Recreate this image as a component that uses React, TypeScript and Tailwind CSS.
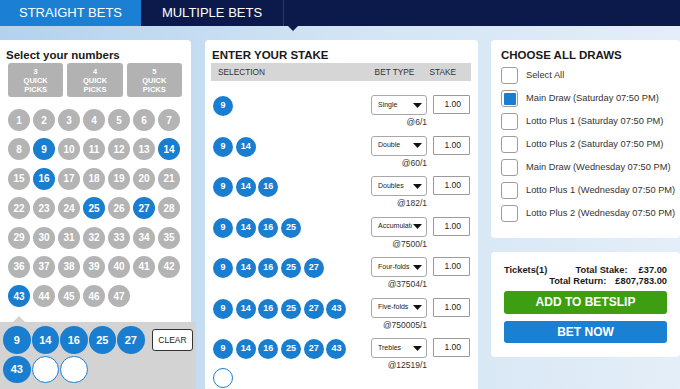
import React from 'react';

const picked = [9, 14, 16, 25, 27, 43];
const numbers = Array.from({ length: 47 }, (_, i) => i + 1);

const bets = [
  { balls: [9], type: 'Single', odds: '@6/1' },
  { balls: [9, 14], type: 'Double', odds: '@60/1' },
  { balls: [9, 14, 16], type: 'Doubles', odds: '@182/1' },
  { balls: [9, 14, 16, 25], type: 'Accumulator', odds: '@7500/1' },
  { balls: [9, 14, 16, 25, 27], type: 'Four-folds', odds: '@37504/1' },
  { balls: [9, 14, 16, 25, 27, 43], type: 'Five-folds', odds: '@750005/1' },
  { balls: [9, 14, 16, 25, 27, 43], type: 'Trebles', odds: '@12519/1', extra: true },
];

const draws = [
  { label: 'Select All', on: false },
  { label: 'Main Draw (Saturday 07:50 PM)', on: true },
  { label: 'Lotto Plus 1 (Saturday 07:50 PM)', on: false },
  { label: 'Lotto Plus 2 (Saturday 07:50 PM)', on: false },
  { label: 'Main Draw (Wednesday 07:50 PM)', on: false },
  { label: 'Lotto Plus 1 (Wednesday 07:50 PM)', on: false },
  { label: 'Lotto Plus 2 (Wednesday 07:50 PM)', on: false },
];

const narrowFace = "font-['Liberation_Sans_Narrow','Arial_Narrow','Liberation_Sans',sans-serif]";
const narrow = `${narrowFace} font-bold`;

function Caret() {
  return (
    <svg width="9" height="5" viewBox="0 0 9 5" className="shrink-0">
      <path d="M0 0h9L4.5 5z" fill="#111" />
    </svg>
  );
}

export default function App() {
  return (
    <div className="relative h-[389px] w-[680px] overflow-hidden bg-gradient-to-r from-[#b3d2ee] via-[#d2e4f4] to-[#e4eef8] font-['Liberation_Sans',Arial,sans-serif]">
      {/* tabs */}
      <div className="relative z-10 flex h-[26px] bg-[#0b1a4a]">
        <div className={`flex w-[141px] items-center justify-center bg-[#1b80d3] text-[13px] text-white ${narrowFace}`}>
          STRAIGHT BETS
        </div>
        <div className={`flex w-[142px] items-center justify-center text-[13px] text-white ${narrowFace}`}>
          MULTIPLE BETS
        </div>
        <div className="w-px bg-[#2c3a63]" />
        <div className="absolute left-[288px] top-[26px] h-0 w-0 border-l-[5px] border-r-[5px] border-t-[5px] border-l-transparent border-r-transparent border-t-[#0b1a4a]" />
      </div>

      <div className="flex items-start pt-[14px]">
        {/* left: numbers */}
        <div className="w-[191px] shrink-0">
          <div className="rounded-tr-[4px] bg-white pb-[15px] pt-[8px]">
            <div className={`pl-[6px] text-[11.5px] leading-[14px] text-[#1a1a1a] ${narrow}`}>Select your numbers</div>
            <div className="mt-[1px] grid grid-cols-3 gap-[4px] pl-[8px] pr-[9px]">
              {[3, 4, 5].map((n) => (
                <div
                  key={n}
                  className="flex h-[34px] flex-col items-center justify-center rounded-[3px] bg-[#b2b2b2] text-[7.5px] font-bold leading-[9px] text-white"
                >
                  <span>{n}</span>
                  <span>QUICK</span>
                  <span>PICKS</span>
                </div>
              ))}
            </div>
            <div className="mt-[12px] grid grid-cols-[repeat(7,22px)] gap-x-[3px] gap-y-[7.4px] pl-[8px]">
              {numbers.map((n) => (
                <div
                  key={n}
                  className={`flex h-[22px] w-[22px] items-center justify-center rounded-full text-[10px] font-bold text-white ${
                    picked.includes(n) ? 'bg-[#1a7ed0]' : 'bg-[#b4b4b4]'
                  }`}
                >
                  {n}
                </div>
              ))}
            </div>
          </div>
          <div className="relative flex h-[70px] w-[196px] bg-[#d3d3d3] pl-[3px] pt-[4px]">
            <div className="absolute -top-[6px] left-[13px] h-0 w-0 border-b-[6px] border-l-[6px] border-r-[6px] border-b-[#d3d3d3] border-l-transparent border-r-transparent" />
            <div className="grid h-fit grid-cols-[repeat(5,27.5px)] gap-x-[1px] gap-y-[2px]">
              {[...picked, 0, 0].map((n, i) => (
                <div
                  key={i}
                  className={`flex h-[27.5px] w-[27.5px] items-center justify-center rounded-full text-[11px] font-bold text-white ${
                    n ? 'bg-[#1a7ed0]' : 'border border-[#1a7ed0] bg-white'
                  }`}
                >
                  {n || ''}
                </div>
              ))}
            </div>
            <div className="ml-[7.5px] mt-[3px] flex h-[22px] w-[41px] items-center justify-center rounded-[3px] border border-[#333] bg-white text-[8.5px] text-[#222]">
              CLEAR
            </div>
          </div>
        </div>

        {/* middle: stake */}
        <div className="ml-[14px] h-[400px] w-[273px] shrink-0 rounded-t-[4px] bg-white pt-[8px]">
          <div className={`pl-[7px] text-[11.5px] leading-[14px] text-[#1a1a1a] ${narrow}`}>ENTER YOUR STAKE</div>
          <div className="ml-[6px] mr-[7px] mt-[1px] flex h-[18px] items-center bg-[#d6d6d6] pr-[15px] text-[8.3px] text-[#333]">
            <span className="flex-1 pl-[7px]">SELECTION</span>
            <span>BET TYPE</span>
            <span className="ml-[15px]">STAKE</span>
          </div>
          <div className="mt-[14px]">
            {bets.map((b, i) => (
              <div key={i} className="flex min-h-[40.5px] items-start justify-between pl-[8px] pr-[8px]">
                <div className="mt-[1px] flex w-[140px] flex-wrap gap-x-[2.7px] gap-y-[9px]">
                  {b.balls.map((n) => (
                    <div
                      key={n}
                      className="flex h-[20px] w-[20px] items-center justify-center rounded-full bg-[#1a7ed0] text-[9px] font-bold text-white"
                    >
                      {n}
                    </div>
                  ))}
                  {b.extra && <div className="h-[20px] w-[20px] rounded-full border border-[#1a7ed0] bg-white" />}
                </div>
                <div className="flex gap-[6px]">
                  <div className="flex flex-col items-end">
                    <div className="flex h-[20px] w-[56px] items-center overflow-hidden rounded-[3px] border border-[#a8a8a8] bg-white pl-[6px] pr-[4px] text-[7px] text-[#222]">
                      <span className="flex-1 whitespace-nowrap">{b.type}</span>
                      <div className="-ml-[10px] bg-white pl-[1px]">
                        <Caret />
                      </div>
                    </div>
                    <div className="mt-[2px] text-[8.5px] leading-[10px] text-[#333]">{b.odds}</div>
                  </div>
                  <div className="flex h-[19px] w-[37px] items-center justify-end rounded-[1px] border border-[#9a9a9a] bg-white pr-[8px] text-[8.5px] text-[#222]">
                    1.00
                  </div>
                </div>
              </div>
            ))}
          </div>
        </div>

        {/* right: draws + summary */}
        <div className="ml-[13px] w-[189px] shrink-0">
          <div className="h-[198px] rounded-[4px] bg-white pl-[10px] pt-[8px]">
            <div className={`text-[11.5px] leading-[14px] text-[#1a1a1a] ${narrow}`}>CHOOSE ALL DRAWS</div>
            <div className="mt-[5px] flex flex-col gap-[6px]">
              {draws.map((d) => (
                <div key={d.label} className="flex h-[17px] items-center">
                  <div className="flex h-[17px] w-[17px] items-center justify-center rounded-[3px] border border-[#9d9d9d] bg-white">
                    {d.on && <div className="h-[12px] w-[12px] rounded-[1px] bg-[#1a7ed0]" />}
                  </div>
                  <span className="ml-[8px] whitespace-nowrap text-[9.3px] text-[#333]">{d.label}</span>
                </div>
              ))}
            </div>
          </div>
          <div className="mt-[14px] h-[105px] rounded-[4px] bg-white px-[13px] pt-[13px]">
            <div className="flex justify-between text-[9.3px] font-bold leading-[10.5px] text-[#1a1a1a]">
              <span>Tickets(1)</span>
              <div className="flex flex-col items-end">
                <div className="flex gap-[11px]">
                  <span>Total Stake:</span>
                  <span>£37.00</span>
                </div>
                <div className="flex gap-[9px]">
                  <span>Total Return:</span>
                  <span>£807,783.00</span>
                </div>
              </div>
            </div>
            <div className={`mt-[5px] flex h-[22.5px] items-center justify-center rounded-[3px] bg-[#3c9e10] text-[12px] text-white ${narrow}`}>
              ADD TO BETSLIP
            </div>
            <div className={`mt-[7px] flex h-[22.5px] items-center justify-center rounded-[3px] bg-[#1a80d1] text-[12px] text-white ${narrow}`}>
              BET NOW
            </div>
          </div>
        </div>
      </div>
    </div>
  );
}
